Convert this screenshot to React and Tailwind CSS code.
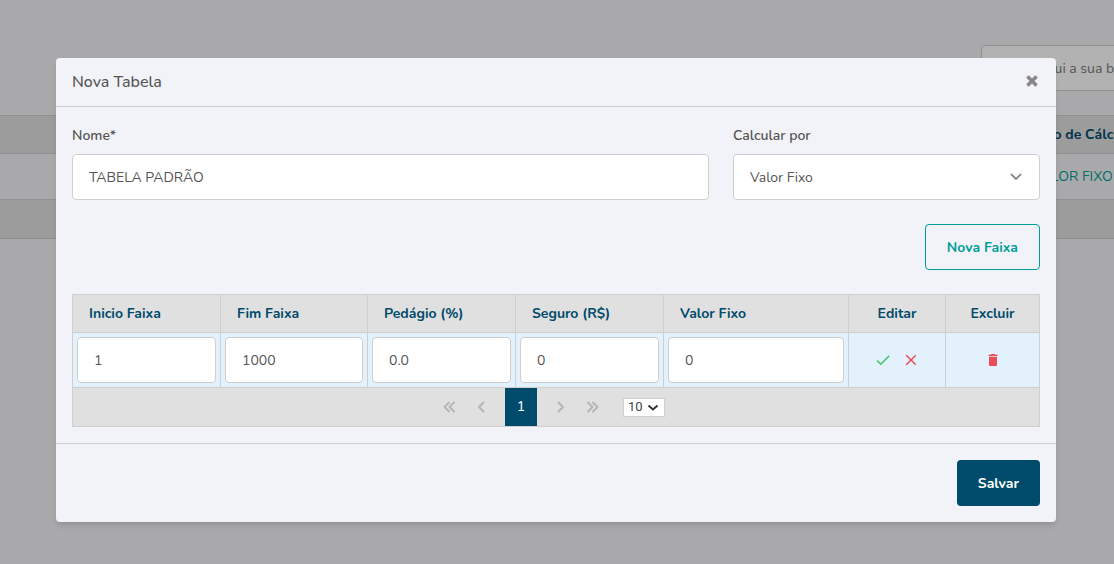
import { useState } from 'react';
import { MdCheck, MdClose, MdDelete } from 'react-icons/md';

const columns = [
  { key: 'inicio', label: 'Inicio Faixa', width: 'w-[148px]' },
  { key: 'fim', label: 'Fim Faixa', width: 'w-[147px]' },
  { key: 'pedagio', label: 'Pedágio (%)', width: 'w-[148px]' },
  { key: 'seguro', label: 'Seguro (R$)', width: 'w-[148px]' },
  { key: 'valor', label: 'Valor Fixo', width: 'w-[185px]' },
];

const inputClass =
  'h-[46px] w-full rounded border border-[#cfcfcf] bg-white px-4 text-sm text-[#555555] outline-none';

function Chevron({ className, d }) {
  return (
    <svg
      className={className}
      viewBox="0 0 14 14"
      fill="none"
      stroke="currentColor"
      strokeWidth="1.8"
      strokeLinecap="round"
      strokeLinejoin="round"
      aria-hidden="true"
    >
      <path d={d} />
    </svg>
  );
}

function CloseIcon() {
  return (
    <svg className="size-3.5" viewBox="-48 208 1504 1504" fill="currentColor" aria-hidden="true">
      <path d="M1298 1322q0 40-28 68l-136 136q-28 28-68 28t-68-28l-294-294-294 294q-28 28-68 28t-68-28l-136-136q-28-28-28-68t28-68l294-294-294-294q-28-28-28-68t28-68l136-136q28-28 68-28t68 28l294 294 294-294q28-28 68-28t68 28l136 136q28 28 28 68t-28 68l-294 294 294 294q28 28 28 68z" />
    </svg>
  );
}

function PageButton({ label, d }) {
  return (
    <button type="button" aria-label={label} className="flex h-[38px] w-8 items-center justify-center text-[#b4b4b4]">
      <Chevron className="size-3.5" d={d} />
    </button>
  );
}

function Background() {
  return (
    <div className="min-h-screen overflow-hidden bg-[#f2f2f5] pt-[45px]" aria-hidden="true">
      <div className="-mr-40 flex justify-end">
        <div className="flex h-[46px] w-[293px] items-center rounded border border-[#cfcfcf] bg-white px-4 pt-0.5 text-sm text-[#7a7a7a]">
          Digite aqui a sua busca
        </div>
      </div>
      <div className="-mr-40 mt-6 border-y border-[#cfcfcf] bg-[#e0e0e0]">
        <div className="flex h-[37px] items-center justify-end text-sm font-bold text-[#004b6b]">
          <div className="w-[242px]">Tipo de Cálculo</div>
        </div>
      </div>
      <div className="-mr-40 flex h-[45px] items-center justify-end text-sm text-[#009e9a]">
        <div className="w-[242px]">VALOR FIXO</div>
      </div>
      <div className="-mr-40 h-10 border-y border-[#cfcfcf] bg-[#e0e0e0]" />
    </div>
  );
}

function Paginator() {
  return (
    <div className="flex items-center justify-center border border-t-0 border-[#cfcfcf] bg-[#e0e0e0]">
      <PageButton label="Primeira página" d="M7 2.5 2.5 7 7 11.5M12 2.5 7.5 7l4.5 4.5" />
      <PageButton label="Página anterior" d="M9.5 2.5 5 7l4.5 4.5" />
      <button type="button" className="mx-2 h-[38px] w-8 bg-[#004b6b] text-sm text-white">
        1
      </button>
      <PageButton label="Próxima página" d="M4.5 2.5 9 7l-4.5 4.5" />
      <PageButton label="Última página" d="M2 2.5 6.5 7 2 11.5M7 2.5 11.5 7 7 11.5" />
      <div className="relative mx-3.5">
        <select
          aria-label="Linhas por página"
          className="block h-[19px] w-[42px] appearance-none border border-[#cfcfcf] bg-white pl-1 font-['Roboto',sans-serif] text-[13px] leading-4 text-[#444444]"
        >
          <option>10</option>
          <option>20</option>
        </select>
        <svg
          className="pointer-events-none absolute top-1.5 right-1.5 h-2 w-3 text-[#333333]"
          viewBox="0 0 12 8"
          fill="none"
          stroke="currentColor"
          strokeWidth="2"
          aria-hidden="true"
        >
          <path d="M1.5 1.5 6 5.5l4.5-4" />
        </svg>
      </div>
    </div>
  );
}

export default function App() {
  const [nome, setNome] = useState('TABELA PADRÃO');
  const [faixa, setFaixa] = useState({ inicio: '1', fim: '1000', pedagio: '0.0', seguro: '0', valor: '0' });

  return (
    <div className="relative font-['Nunito','Lato',sans-serif] text-[#555555]">
      <Background />

      <div className="absolute inset-0 bg-black/30 pt-[58px] pr-[58px] pl-14">
        <div role="dialog" aria-labelledby="titulo" className="rounded bg-[#f2f3f8] shadow-md">
          <header className="flex h-[49px] items-center justify-between border-b border-[#cfcfcf] px-4">
            <h1 id="titulo" className="text-base font-medium">
              Nova Tabela
            </h1>
            <button type="button" aria-label="Fechar" className="-mt-0.5 pr-px text-[#888888]">
              <CloseIcon />
            </button>
          </header>

          <div className="p-4">
            <div className="grid grid-cols-[637fr_307fr] gap-6 text-sm">
              <div>
                <label htmlFor="nome" className="mb-1.5 block leading-[25px] font-semibold">
                  Nome*
                </label>
                <input id="nome" className={inputClass} value={nome} onChange={(e) => setNome(e.target.value)} />
              </div>
              <div>
                <label htmlFor="calcular" className="mb-1.5 block leading-[25px] font-semibold">
                  Calcular por
                </label>
                <div className="relative">
                  <select id="calcular" className={`${inputClass} appearance-none pt-0.5`}>
                    <option>Valor Fixo</option>
                    <option>Percentual</option>
                  </select>
                  <Chevron
                    className="pointer-events-none absolute top-4 right-[17px] size-3.5 text-[#8c8c8c]"
                    d="M2.5 4.5 7 9l4.5-4.5"
                  />
                </div>
              </div>
            </div>

            <div className="my-6 flex justify-end">
              <button
                type="button"
                className="h-[46px] rounded border border-[#009e9a] px-[21px] pt-0.5 text-sm font-bold text-[#009e9a]"
              >
                Nova Faixa
              </button>
            </div>

            <table className="w-full table-fixed border-collapse text-sm">
              <thead>
                <tr className="h-[38px] bg-[#e0e0e0] text-[#004b6b]">
                  {columns.map((col) => (
                    <th key={col.key} className={`${col.width} border border-[#cfcfcf] px-4 text-left font-bold`}>
                      {col.label}
                    </th>
                  ))}
                  <th className="w-[97px] border border-[#cfcfcf] font-bold">Editar</th>
                  <th className="w-[94px] border border-[#cfcfcf] font-bold">Excluir</th>
                </tr>
              </thead>
              <tbody>
                <tr className="bg-[#e3f1fc]">
                  {columns.map((col) => (
                    <td key={col.key} className="border border-[#cfcfcf] p-1">
                      <input
                        aria-label={col.label}
                        className={inputClass}
                        value={faixa[col.key]}
                        onChange={(e) => setFaixa({ ...faixa, [col.key]: e.target.value })}
                      />
                    </td>
                  ))}
                  <td className="border border-[#cfcfcf]">
                    <div className="flex justify-center gap-2.5">
                      <button type="button" aria-label="Confirmar" className="text-[#3cc961]">
                        <MdCheck className="size-[18px]" />
                      </button>
                      <button type="button" aria-label="Cancelar" className="text-[#ea4d56]">
                        <MdClose className="size-[18px]" />
                      </button>
                    </div>
                  </td>
                  <td className="border border-[#cfcfcf]">
                    <div className="flex justify-center">
                      <button type="button" aria-label="Excluir" className="text-[#ea4d56]">
                        <MdDelete className="size-4" />
                      </button>
                    </div>
                  </td>
                </tr>
              </tbody>
            </table>
            <Paginator />
          </div>

          <footer className="flex justify-end border-t border-[#cfcfcf] p-4">
            <button type="button" className="h-[46px] rounded bg-[#004b6b] px-[21px] pt-0.5 text-sm font-bold text-white">
              Salvar
            </button>
          </footer>
        </div>
      </div>
    </div>
  );
}
